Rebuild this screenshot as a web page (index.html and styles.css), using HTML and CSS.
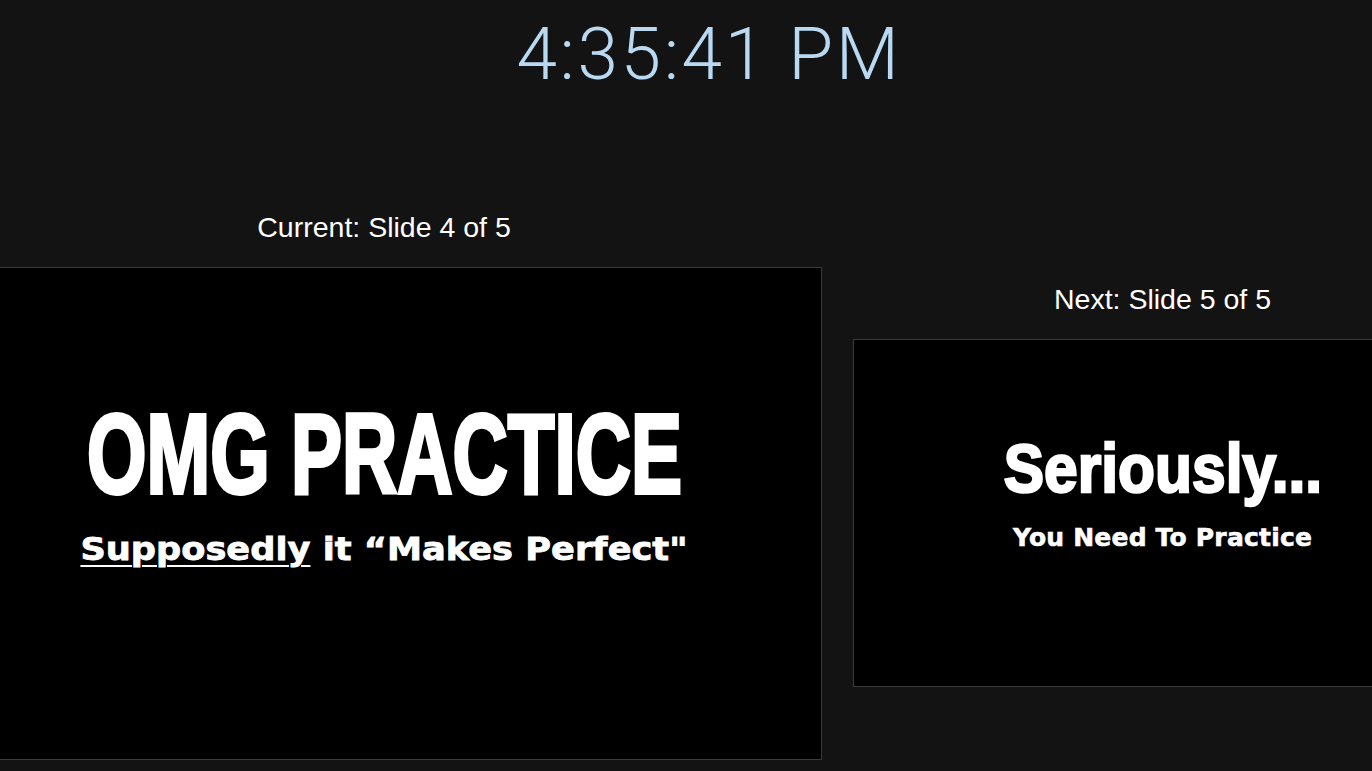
FILE: index.html
```html
<!DOCTYPE html>
<html lang="en">
<head>
<meta charset="utf-8">
<title>Presenter View</title>
<link rel="stylesheet" href="styles.css">
</head>
<body>
  <header class="clock-bar">
    <div class="clock">4:35:41 PM</div>
  </header>
  <main class="stage">
    <section class="pane pane-current">
      <div class="pane-label">Current: Slide 4 of 5</div>
      <div class="slide slide-current">
        <div class="headline headline-omg"><span class="squeeze squeeze-omg">OMG PRACTICE</span></div>
        <div class="subline subline-omg"><span class="widen"><u class="uline">Supposedly</u> it “Makes Perfect"</span></div>
      </div>
    </section>
    <section class="pane pane-next">
      <div class="pane-label">Next: Slide 5 of 5</div>
      <div class="slide slide-next">
        <div class="headline headline-ser"><span class="squeeze squeeze-ser">Seriously...</span></div>
        <div class="subline subline-ser">You Need To Practice</div>
      </div>
    </section>
  </main>
</body>
</html>
```
FILE: styles.css
```css
html, body {
  margin: 0;
  padding: 0;
}
body {
  width: 1372px;
  height: 771px;
  overflow: hidden;
  background: #131313;
  font-family: "Liberation Sans", Arial, sans-serif;
  color: #ffffff;
}
.clock-bar {
  display: flex;
  justify-content: center;
  padding: 18px 0 0 46px;
}
.clock {
  font-family: Roboto, "Liberation Sans", sans-serif;
  font-weight: 300;
  font-size: 73px;
  line-height: 73px;
  height: 73px;
  letter-spacing: 2.6px;
  color: #b9d9f2;
  white-space: nowrap;
}
.stage {
  display: flex;
  align-items: flex-start;
  margin-top: 120px;
  gap: 31px;
}
.pane {
  display: flex;
  flex-direction: column;
  align-items: center;
  flex: none;
}
.pane-current {
  width: 876px;
  margin-left: -54px;
}
.pane-next {
  width: 619px;
  margin-top: 72px;
}
.pane-label {
  font-size: 28.5px;
  line-height: 32px;
  height: 32px;
  white-space: nowrap;
}
.slide {
  margin-top: 24px;
  box-sizing: border-box;
  border: 1px solid #3a3a3d;
  background: #000000;
  display: flex;
  flex-direction: column;
  align-items: center;
}
.slide-current {
  width: 876px;
  height: 493px;
  padding-top: 130px;
}
.slide-next {
  width: 619px;
  height: 348px;
  padding-top: 94px;
}
.headline {
  font-family: "Liberation Sans", Arial, sans-serif;
  font-weight: 700;
  white-space: nowrap;
  display: flex;
  justify-content: center;
}
.squeeze {
  display: inline-block;
}
.headline-omg {
  font-size: 113px;
  line-height: 113px;
  height: 113px;
}
.squeeze-omg {
  transform: scaleX(0.677);
  -webkit-text-stroke: 4px #ffffff;
}
.headline-ser {
  font-size: 68px;
  line-height: 68px;
  height: 68px;
}
.squeeze-ser {
  transform: scaleX(0.89);
  -webkit-text-stroke: 2.5px #ffffff;
}
.subline {
  font-family: "DejaVu Sans", "Liberation Sans", sans-serif;
  font-weight: 700;
  white-space: nowrap;
}
.subline-omg {
  font-size: 32px;
  line-height: 32px;
  margin-top: 22px;
}
.widen {
  display: inline-block;
  transform: scaleX(1.1);
  -webkit-text-stroke: 0.8px #ffffff;
}
.uline {
  text-decoration: underline;
  text-decoration-thickness: 2px;
  text-underline-offset: 5px;
}
.subline-ser {
  font-size: 25px;
  line-height: 25px;
  margin-top: 23px;
  letter-spacing: 0.2px;
  -webkit-text-stroke: 0.6px #ffffff;
}
```
